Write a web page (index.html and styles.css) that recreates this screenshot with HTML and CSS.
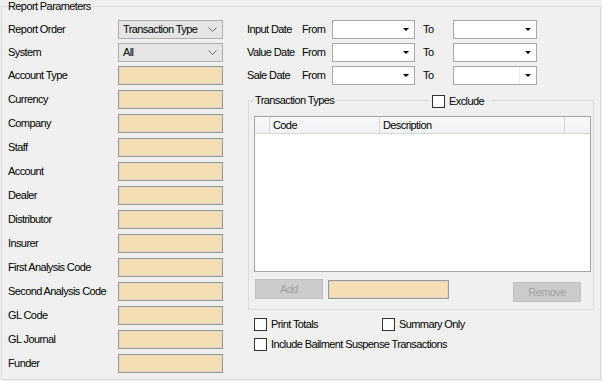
FILE: index.html
```html
<!DOCTYPE html>
<html lang="en">
<head>
  <meta charset="UTF-8" />
  <title>Report Parameters</title>
  <link rel="stylesheet" href="styles.css">
</head>
<body>

  <fieldset class="params">
    <legend>Report Parameters</legend>
    <div class="layout">

      <!-- left: lookup fields -->
      <div class="fields">
        <div class="row tight">
          <label>Report Order</label>
          <div class="combo"><span>Transaction Type</span>
            <svg width="9" height="5" viewBox="0 0 9 5"><polyline points="0.5,0.5 4.5,4.5 8.5,0.5" fill="none" stroke="#6a6a6a" stroke-width="1"/></svg>
          </div>
        </div>
        <div class="row tight">
          <label>System</label>
          <div class="combo"><span>All</span>
            <svg width="9" height="5" viewBox="0 0 9 5"><polyline points="0.5,0.5 4.5,4.5 8.5,0.5" fill="none" stroke="#6a6a6a" stroke-width="1"/></svg>
          </div>
        </div>
        <div class="row"><label>Account Type</label><div class="text"></div></div>
        <div class="row"><label>Currency</label><div class="text"></div></div>
        <div class="row"><label>Company</label><div class="text"></div></div>
        <div class="row"><label>Staff</label><div class="text"></div></div>
        <div class="row"><label>Account</label><div class="text"></div></div>
        <div class="row"><label>Dealer</label><div class="text"></div></div>
        <div class="row"><label>Distributor</label><div class="text"></div></div>
        <div class="row"><label>Insurer</label><div class="text"></div></div>
        <div class="row"><label>First Analysis Code</label><div class="text"></div></div>
        <div class="row"><label>Second Analysis Code</label><div class="text"></div></div>
        <div class="row"><label>GL Code</label><div class="text"></div></div>
        <div class="row"><label>GL Journal</label><div class="text"></div></div>
        <div class="row"><label>Funder</label><div class="text"></div></div>
      </div>

      <!-- right: dates and transaction types -->
      <div class="side">
        <div class="dates">
          <div class="date-row">
            <span>Input Date</span><span>From</span>
            <div class="picker"><i class="arrow"></i></div>
            <span class="to">To</span>
            <div class="picker"><i class="arrow"></i></div>
          </div>
          <div class="date-row">
            <span>Value Date</span><span>From</span>
            <div class="picker"><i class="arrow"></i></div>
            <span class="to">To</span>
            <div class="picker"><i class="arrow"></i></div>
          </div>
          <div class="date-row">
            <span>Sale Date</span><span>From</span>
            <div class="picker"><i class="arrow"></i></div>
            <span class="to">To</span>
            <div class="picker split"><i class="arrow"></i></div>
          </div>
        </div>

        <div class="types-wrap">
          <fieldset class="types">
            <legend>Transaction Types</legend>
            <div class="grid">
              <div class="grid-head">
                <span class="rh"></span>
                <span class="col-code">Code</span>
                <span class="col-desc">Description</span>
                <span class="col-pad"></span>
              </div>
            </div>
            <div class="actions">
              <div class="btn add">Add</div>
              <div class="text add-code"></div>
              <div class="btn remove">Remove</div>
            </div>
          </fieldset>
          <label class="check exclude"><span class="box"></span>Exclude</label>
        </div>

        <div class="options">
          <div class="opt-row">
            <label class="check first"><span class="box"></span>Print Totals</label>
            <label class="check"><span class="box"></span>Summary Only</label>
          </div>
          <div class="opt-row">
            <label class="check"><span class="box"></span>Include Bailment Suspense Transactions</label>
          </div>
        </div>
      </div>

    </div>
  </fieldset>

</body>
</html>
```

FILE: styles.css
```css
body {
  margin: 0;
  background: #f0f0f0;
  color: #000;
  font-family: "Liberation Sans", Arial, sans-serif;
  font-size: 11px;
  line-height: 13px;
  letter-spacing: -0.6px;
}

fieldset {
  margin: 0;
  min-width: 0;
  border: 1px solid #dadada;
}

legend {
  padding: 0 1px;
  margin-left: -1px;
  line-height: 13px;
}

.params {
  margin: 0 1px;
  padding: 7px 6px 6px 6px;
}

.layout {
  display: flex;
}

/* left column */
.fields {
  width: 215px;
  display: flex;
  flex-direction: column;
  gap: 5px;
}

.row {
  display: flex;
  align-items: center;
  height: 19px;
}

.row.tight {
  margin-bottom: -1px;
}

.row label {
  width: 110px;
}

.combo {
  width: 105px;
  height: 19px;
  box-sizing: border-box;
  border: 1px solid #adadad;
  background: #e5e5e5;
  display: flex;
  align-items: center;
  justify-content: space-between;
  padding: 0 5px 0 4px;
}

.text {
  width: 105px;
  height: 19px;
  box-sizing: border-box;
  border: 1px solid #999;
  background: #f5deb3;
  box-shadow: inset 0 0 0 1px #ddd6c8;
}

/* right column */
.side {
  flex: 1;
  margin-left: 24px;
}

.dates {
  display: flex;
  flex-direction: column;
  gap: 4px;
}

.date-row {
  display: grid;
  grid-template-columns: 55px 30px 83px 38px 84px;
  align-items: center;
  height: 19px;
}

.to {
  padding-left: 8px;
}

.picker {
  height: 19px;
  box-sizing: border-box;
  border: 1px solid #a8a8a8;
  background: #fff;
  display: flex;
  align-items: center;
  justify-content: flex-end;
  padding-right: 5px;
}

.picker.split {
  background: linear-gradient(to right, #fff 65px, #ececec 65px, #ececec 66px, #fff 66px);
}

.arrow {
  width: 0;
  height: 0;
  border-left: 3px solid transparent;
  border-right: 3px solid transparent;
  border-top: 3px solid #000;
}

.types-wrap {
  position: relative;
  margin: 9px 0 0 1px;
}

.types {
  padding: 9px 2px 7px 5px;
}

.types legend {
  margin-left: 0;
}

.grid {
  height: 156px;
  box-sizing: border-box;
  border: 1px solid #a3a3a3;
  background: #fff;
}

.grid-head {
  display: flex;
  height: 17px;
  box-sizing: border-box;
  border-bottom: 1px solid #d5d5d5;
  background: linear-gradient(#f8f8f9, #f1f2f4);
}

.grid-head span {
  box-sizing: border-box;
  border-right: 1px solid #d5d5d5;
  padding-left: 3px;
  line-height: 16px;
}

.grid-head .rh { width: 15px; }
.grid-head .col-code { width: 110px; }
.grid-head .col-desc { width: 185px; }
.grid-head .col-pad { flex: 1; border-right: none; }

.actions {
  display: flex;
  align-items: flex-start;
  margin-top: 7px;
}

.btn {
  width: 68px;
  height: 20px;
  box-sizing: border-box;
  border: 1px solid #bfbfbf;
  background: #cccccc;
  color: #a0a0a0;
  display: flex;
  align-items: center;
  justify-content: center;
}

.add {
  margin-left: 1px;
}

.add-code {
  width: 121px;
  margin: 1px 0 0 5px;
}

.remove {
  margin: 3px 10px 0 auto;
}

/* checkboxes */
.check {
  display: flex;
  align-items: center;
  gap: 4px;
  height: 13px;
}

.box {
  width: 13px;
  height: 13px;
  box-sizing: border-box;
  border: 1px solid #333;
  background: #fff;
}

.exclude {
  position: absolute;
  top: 1px;
  left: 180px;
  padding: 0 8px 0 4px;
  background: #f0f0f0;
}

.options {
  margin-top: 8px;
  padding-left: 7px;
  display: flex;
  flex-direction: column;
  gap: 7px;
}

.opt-row {
  display: flex;
}

.check.first {
  width: 128px;
}
```
